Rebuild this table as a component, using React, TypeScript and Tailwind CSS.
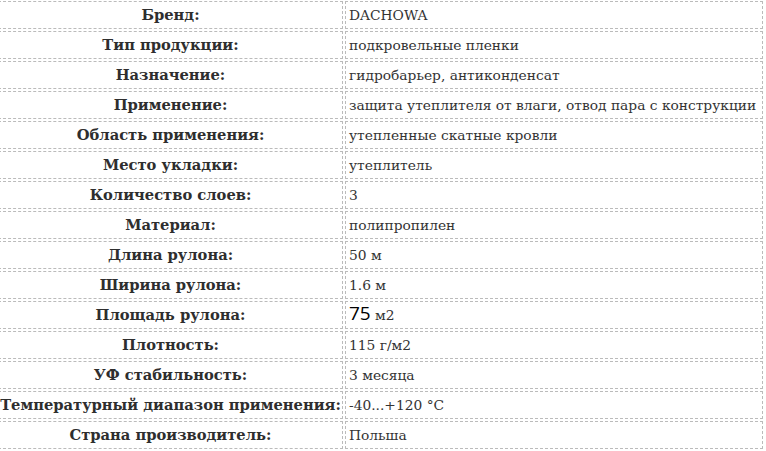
import React from "react";

const rows: [string, React.ReactNode][] = [
  ["Бренд:", "DACHOWA"],
  ["Тип продукции:", "подкровельные пленки"],
  ["Назначение:", "гидробарьер, антиконденсат"],
  ["Применение:", "защита утеплителя от влаги, отвод пара с конструкции"],
  ["Область применения:", "утепленные скатные кровли"],
  ["Место укладки:", "утеплитель"],
  ["Количество слоев:", "3"],
  ["Материал:", "полипропилен"],
  ["Длина рулона:", "50 м"],
  ["Ширина рулона:", "1.6 м"],
  [
    "Площадь рулона:",
    <>
      <span className="font-['Open_Sans',sans-serif] text-[19px] leading-none text-black">75</span>
      <span> м2</span>
    </>,
  ],
  ["Плотность:", "115 г/м2"],
  ["УФ стабильность:", "3 месяца"],
  ["Температурный диапазон применения:", "-40...+120 °C"],
  ["Страна производитель:", "Польша"],
];

export default function App() {
  return (
    <div className="w-[766px] h-[451px] overflow-hidden bg-white">
      <table className="border-separate border-spacing-[2px] ml-[-4px] mt-[-1px] w-[769px] font-['DejaVu_Serif',serif] text-[13.8px] text-[#333]">
        <tbody>
          {rows.map(([k, v], i) => (
            <tr key={i}>
              <td className="w-[345px] h-[28px] p-0 border border-dashed border-[#bbb] text-center font-bold text-[14.7px] text-[#2e2e2e] whitespace-nowrap">
                {k}
              </td>
              <td className="h-[28px] p-0 pl-[3px] border border-dashed border-[#bbb] text-left whitespace-nowrap">
                {v}
              </td>
            </tr>
          ))}
        </tbody>
      </table>
    </div>
  );
}
